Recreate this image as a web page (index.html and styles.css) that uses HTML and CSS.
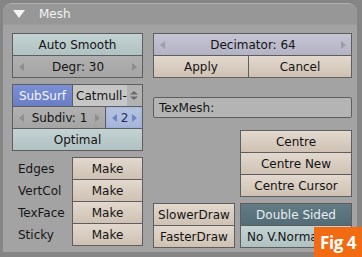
FILE: index.html
```html
<!DOCTYPE html>
<html>
<head>
<meta charset="utf-8">
<link rel="stylesheet" href="styles.css">
</head>
<body>
<div class="stage">
  <div class="panel">
    <div class="header">
      <svg class="tri" width="12" height="8" viewBox="0 0 12 8"><polygon points="0,0 12,0 6,8" fill="#f4f4f4"/></svg>
      <span class="title">Mesh</span>
    </div>
    <div class="content">
      <div class="col left">
        <div class="group">
          <div class="btn teal">Auto Smooth</div>
          <div class="btn num stack"><i class="al"></i><span>Degr: 30</span><i class="ar"></i></div>
        </div>
        <div class="group g2">
          <div class="row">
            <div class="btn blue subsurf">SubSurf</div>
            <div class="btn menu"><span class="mtext">Catmull-</span><span class="ud"><svg width="8" height="9" viewBox="0 0 8 9"><polygon points="0,3.5 8,3.5 4,0" fill="#6a6a6a"/><polygon points="0,5.5 8,5.5 4,9" fill="#6a6a6a"/></svg></span></div>
          </div>
          <div class="row stack">
            <div class="btn num subdiv"><i class="al"></i><span>Subdiv: 1</span><i class="ar"></i></div>
            <div class="btn numblue"><i class="al"></i><span>2</span><i class="ar"></i></div>
          </div>
          <div class="btn teal stack">Optimal</div>
        </div>
        <div class="makes">
          <div class="mrow"><span class="lbl">Edges</span><div class="btn beige make">Make</div></div>
          <div class="mrow stack"><span class="lbl">VertCol</span><div class="btn beige make">Make</div></div>
          <div class="mrow stack"><span class="lbl">TexFace</span><div class="btn beige make">Make</div></div>
          <div class="mrow stack"><span class="lbl">Sticky</span><div class="btn beige make">Make</div></div>
        </div>
      </div>
      <div class="col right">
        <div class="group">
          <div class="btn lav num"><i class="al"></i><span>Decimator: 64</span><i class="ar"></i></div>
          <div class="row stack">
            <div class="btn beige apply">Apply</div>
            <div class="btn beige cancel">Cancel</div>
          </div>
        </div>
        <div class="texmesh">TexMesh:</div>
        <div class="centres">
          <div class="btn beige">Centre</div>
          <div class="btn beige stack">Centre New</div>
          <div class="btn beige stack">Centre Cursor</div>
        </div>
        <div class="bottom">
          <div class="draws">
            <div class="btn beige">SlowerDraw</div>
            <div class="btn beige stack">FasterDraw</div>
          </div>
          <div class="sides">
            <div class="btn dark">Double Sided</div>
            <div class="btn teal stack nov">No V.Norma</div>
          </div>
        </div>
      </div>
    </div>
  </div>
  <div class="badge">Fig 4</div>
</div>
</body>
</html>
```

FILE: styles.css
```css
* { box-sizing: border-box; }
html, body { margin: 0; padding: 0; }
body {
  background: #858585;
  font-family: "DejaVu Sans", sans-serif;
  font-size: 12px;
  color: #141414;
}
.stage {
  position: relative;
  width: 362px;
  height: 257px;
  overflow: hidden;
  padding: 3px 5px 0 3px;
}
.panel {
  height: 249px;
  background: #a3a3a3;
  border-radius: 9px 9px 0 0;
  border-top: 1px solid #b0b0b0;
  overflow: hidden;
}
.header {
  height: 21px;
  background: #979797;
  display: flex;
  align-items: center;
  padding-left: 10px;
  border-bottom: 1px solid #9c9c9c;
}
.title {
  color: #f2f2f2;
  margin-left: 14px;
  line-height: 14px;
}
.content {
  display: flex;
  gap: 10px;
  padding: 8px 5px 0 9px;
}
.col { display: flex; flex-direction: column; }
.left { width: 131px; }
.right { width: 199px; }
.group { display: flex; flex-direction: column; }
.g2 { margin-top: 6px; }
.row { display: flex; }
.stack { margin-top: -1px; }

.btn {
  height: 23px;
  border: 1px solid #5e5e5e;
  display: flex;
  align-items: center;
  justify-content: center;
  white-space: nowrap;
  overflow: hidden;
  line-height: 14px;
}
.teal { background: linear-gradient(#c3d2d3, #b1c2c3); }
.beige { background: linear-gradient(#e2d8cd, #cfc2b4); }
.num {
  background: linear-gradient(#b0b0b0, #a5a5a5);
  justify-content: space-between;
  padding: 0 5px 0 6px;
}
.lav.num { background: linear-gradient(#c4c4d3, #b3b3c4); }
.num i, .numblue i {
  display: block;
  width: 0; height: 0;
  border-top: 4px solid transparent;
  border-bottom: 4px solid transparent;
}
.num .al { border-right: 5px solid #8e8e8e; }
.num .ar { border-left: 5px solid #8e8e8e; }
.lav .al { border-right-color: #9c9cae; }
.lav .ar { border-left-color: #9c9cae; }
.blue {
  background: linear-gradient(#7b8fd6, #6a7ec6);
  color: #f4f6ff;
}
.subsurf { width: 61px; }
.menu {
  flex: 1;
  margin-left: -1px;
  background: #c6c6c6;
  justify-content: space-between;
  padding: 0 0 0 3px;
}
.ud {
  width: 19px;
  height: 100%;
  background: #b2b2b2;
  display: flex;
  align-items: center;
  justify-content: center;
}
.subdiv { width: 94px; }
.numblue {
  flex: 1;
  margin-left: -1px;
  background: linear-gradient(#b6c4e0, #a6b6d8);
  box-shadow: inset 0 0 3px #8fa6e0;
  color: #1d2b66;
  justify-content: space-between;
  padding: 0 5px 0 6px;
}
.numblue .al { border-right: 5px solid #6d84c4; }
.numblue .ar { border-left: 5px solid #6d84c4; }

.makes { margin-top: 6px; display: flex; flex-direction: column; }
.mrow { display: flex; align-items: center; }
.lbl { width: 60px; padding-left: 6px; color: #161616; }
.make { width: 71px; }

.apply { width: 96px; }
.cancel { flex: 1; margin-left: -1px; }

.texmesh {
  margin-top: 19px;
  height: 21px;
  border: 1px solid #5e5e5e;
  background: #b4b4b4;
  display: flex;
  align-items: center;
  padding-left: 5px;
  border-radius: 2px;
}
.centres {
  margin-top: 12px;
  margin-left: 87px;
  display: flex;
  flex-direction: column;
}
.bottom {
  margin-top: 6px;
  display: flex;
  gap: 5px;
}
.draws { width: 82px; display: flex; flex-direction: column; }
.sides { flex: 1; display: flex; flex-direction: column; }
.dark {
  background: linear-gradient(#627b84, #546c75);
  color: #e6eef0;
}
.nov { justify-content: flex-start; padding-left: 6px; }

.badge {
  position: absolute;
  right: 0;
  bottom: 0;
  width: 48px;
  height: 30px;
  background: #f26b12;
  color: #fff;
  font-family: "Open Sans", sans-serif;
  font-weight: 700;
  font-size: 17px;
  letter-spacing: -0.5px;
  display: flex;
  align-items: center;
  justify-content: center;
  padding-top: 1px;
}
```
